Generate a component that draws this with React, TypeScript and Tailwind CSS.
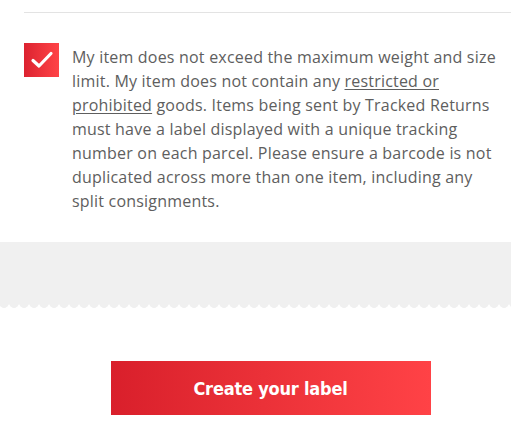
export default function App() {
  return (
    <div className="w-[511px] h-[430px] bg-white overflow-hidden font-['Open_Sans','Noto_Sans',sans-serif]">
      <div className="pl-6 pt-3">
        <div className="h-px bg-[#e3e3e3]" />
      </div>

      <div className="flex gap-[13px] pl-6 pr-[8px] pt-[31px]">
        <div className="w-[35px] h-[34px] shrink-0 mt-[-1px] flex items-center justify-center bg-gradient-to-r from-[#dc2230] to-[#ff4347]">
          <svg width="24" height="20" viewBox="0 0 24 20" fill="none">
            <path d="M3 10.5 L9 16 L21 3.5" stroke="white" strokeWidth="3.2" strokeLinecap="round" strokeLinejoin="round" />
          </svg>
        </div>
        <p className="text-[16px] leading-6 text-[#5e5e5e] tracking-[0.2px] pt-[1px]">
          My item does not exceed the maximum weight and size limit. My item does not contain any{" "}
          <a className="underline underline-offset-2">restricted or prohibited</a> goods. Items being sent by Tracked
          Returns must have a label displayed with a unique tracking number on each parcel. Please ensure a barcode is
          not duplicated across more than one item, including any split consignments.
        </p>
      </div>

      <div className="mt-[29px]">
        <div className="h-[61px] bg-[#f0f0f0]" />
        <div className="h-[5px] bg-[radial-gradient(circle_at_5px_0,#f0f0f0_4.6px,transparent_5.2px)] bg-[length:10px_5px] bg-[position:-1px_0]" />
      </div>

      <div className="flex justify-center pt-[53px] pl-[30px]">
        <button className="w-[320px] h-[54px] bg-gradient-to-r from-[#d91f2b] to-[#ff4246] text-white text-[18px] font-bold font-['DejaVu_Sans_Condensed','DejaVu_Sans',sans-serif] tracking-[-0.2px]">
          Create your label
        </button>
      </div>
    </div>
  );
}
